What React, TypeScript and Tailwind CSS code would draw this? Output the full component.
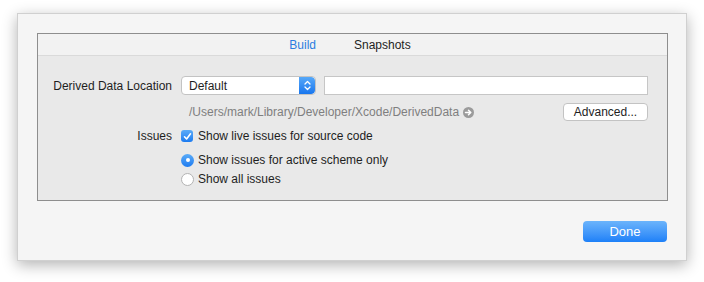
import React from "react";

function Stepper() {
  return (
    <div className="flex h-full w-[16px] items-center justify-center rounded-r-[4px] bg-gradient-to-b from-[#56a8f8] to-[#1776ee]">
      <svg width="7" height="11" viewBox="0 0 7 11" fill="none" stroke="white" strokeWidth="1.3" strokeLinecap="round" strokeLinejoin="round">
        <path d="M1 4 L3.5 1.5 L6 4" />
        <path d="M1 7 L3.5 9.5 L6 7" />
      </svg>
    </div>
  );
}

function Checkbox() {
  return (
    <div className="flex h-[12px] w-[12px] items-center justify-center rounded-[3px] bg-gradient-to-b from-[#5aabf8] to-[#1b7bf0]">
      <svg width="9" height="9" viewBox="0 0 9 9" fill="none" stroke="white" strokeWidth="1.6" strokeLinecap="round" strokeLinejoin="round">
        <path d="M1.5 4.8 L3.6 7 L7.5 1.8" />
      </svg>
    </div>
  );
}

function Radio({ on }: { on?: boolean }) {
  return on ? (
    <div className="flex h-[13px] w-[13px] items-center justify-center rounded-full bg-gradient-to-b from-[#5aabf8] to-[#1b7bf0]">
      <div className="h-[4px] w-[4px] rounded-full bg-white" />
    </div>
  ) : (
    <div className="h-[13px] w-[13px] rounded-full border border-[#b3b3b3] bg-white" />
  );
}

export default function App() {
  return (
    <div
      className="h-[282px] w-[704px] bg-white pl-[17px] pt-[13px] text-[12px] text-[#1e1e1e]"
      style={{ fontFamily: '"Liberation Sans", Arial, sans-serif' }}
    >
      <div className="flex h-[248px] w-[670px] flex-col border border-[#d0d0d0] bg-[#f5f5f5] shadow-[0_4px_14px_rgba(0,0,0,0.3)]">
        <div className="ml-[19px] mt-[19px] flex h-[168px] w-[631px] flex-col border border-[#8e8e8e] bg-[#e9e9e9]">
          <div className="flex h-[22px] items-center justify-center gap-[38px] border-b border-[#dadada] bg-[#f2f2f2] pr-[5px]">
            <span className="text-[#2b7de0]">Build</span>
            <span>Snapshots</span>
          </div>
          <div className="flex flex-col pr-[19px] pt-[20px]">
            <div className="flex h-[19px] items-center">
              <div className="w-[135px] pr-[1px] pt-[1px] text-right">Derived Data Location</div>
              <div className="ml-[8px] flex h-[19px] w-[135px] items-center justify-between overflow-hidden rounded-[4px] border border-[#c3c3c3] bg-white pl-[7px]">
                <span className="pt-[1px]">Default</span>
                <Stepper />
              </div>
              <div className="ml-[8px] h-[19px] flex-1 border border-[#c6c6c6] bg-white" />
            </div>
            <div className="mt-[8px] flex h-[18px] items-center">
              <div className="ml-[151px] flex items-center gap-[4px] text-[#7f7f7f]">
                <span className="-mt-[1px]">/Users/mark/Library/Developer/Xcode/DerivedData</span>
                <svg width="11" height="11" viewBox="0 0 11 11">
                  <circle cx="5.5" cy="5.5" r="5.5" fill="#9b9b9b" />
                  <path d="M2.5 5.5 H7.5 M5.5 3.3 L7.8 5.5 L5.5 7.7" stroke="white" strokeWidth="1.5" fill="none" strokeLinecap="round" strokeLinejoin="round" />
                </svg>
              </div>
              <div className="ml-auto flex h-[18px] w-[85px] items-center justify-center rounded-[4px] border border-[#c3c3c3] bg-white">
                Advanced...
              </div>
            </div>
            <div className="mt-[8px] flex h-[14px] items-center">
              <div className="w-[135px] pr-[1px] text-right">Issues</div>
              <div className="ml-[8px] flex items-center gap-[5px]">
                <Checkbox />
                <span>Show live issues for source code</span>
              </div>
            </div>
            <div className="mt-[10px] flex h-[14px] items-center pl-[143px]">
              <div className="flex items-center gap-[4px]">
                <Radio on />
                <span>Show issues for active scheme only</span>
              </div>
            </div>
            <div className="mt-[5px] flex h-[14px] items-center pl-[143px]">
              <div className="flex items-center gap-[4px]">
                <Radio />
                <span>Show all issues</span>
              </div>
            </div>
          </div>
        </div>
        <div className="mr-[19px] mt-[20px] flex justify-end">
          <div className="flex h-[21px] w-[84px] items-center justify-center rounded-[4px] bg-gradient-to-b from-[#6bb4fb] to-[#1c80f8] text-[13px] text-white">
            Done
          </div>
        </div>
      </div>
    </div>
  );
}
